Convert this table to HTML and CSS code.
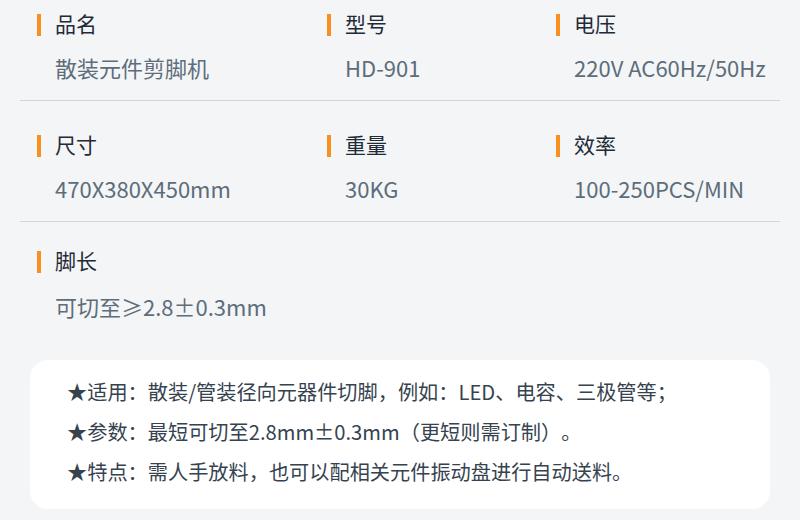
FILE: index.html
```html
<!DOCTYPE html>
<html lang="zh-CN">
<head>
<meta charset="utf-8">
<link rel="stylesheet" href="styles.css">
</head>
<body>
<div class="page">
  <div class="spec-row first">
    <div class="spec"><div class="label">品名</div><div class="value">散装元件剪脚机</div></div>
    <div class="spec"><div class="label">型号</div><div class="value">HD-901</div></div>
    <div class="spec"><div class="label">电压</div><div class="value">220V AC60Hz/50Hz</div></div>
  </div>
  <div class="spec-row">
    <div class="spec"><div class="label">尺寸</div><div class="value">470X380X450mm</div></div>
    <div class="spec"><div class="label">重量</div><div class="value">30KG</div></div>
    <div class="spec"><div class="label">效率</div><div class="value">100-250PCS/MIN</div></div>
  </div>
  <div class="spec-row last">
    <div class="spec"><div class="label">脚长</div><div class="value">可切至≥2.8±0.3mm</div></div>
  </div>
  <div class="note">
    <p>★适用：散装/管装径向元器件切脚，例如：LED、电容、三极管等；</p>
    <p>★参数：最短可切至2.8mm±0.3mm（更短则需订制）。</p>
    <p>★特点：需人手放料，也可以配相关元件振动盘进行自动送料。</p>
  </div>
</div>
</body>
</html>
```

FILE: styles.css
```css
html, body {
  margin: 0;
  padding: 0;
  background: #f4f5f7;
}
body {
  width: 800px;
  height: 520px;
  overflow: hidden;
  font-family: "Noto Sans CJK SC", "Noto Sans", sans-serif;
  text-spacing-trim: space-all;
}
.page {
  padding: 0 20px;
}
.spec-row {
  display: grid;
  grid-template-columns: 290px 229px 1fr;
  padding: 31px 0 19px 17px;
  border-bottom: 1px solid #cfd6dd;
}
.spec-row.first {
  padding-top: 11px;
}
.spec-row.last {
  border-bottom: none;
  padding-top: 26px;
  padding-bottom: 31px;
}
.spec-row.last .value {
  margin-top: 20px;
}
.label {
  position: relative;
  padding-left: 18px;
  font-size: 21px;
  line-height: 24px;
  color: #1f2b36;
}
.label::before {
  content: "";
  position: absolute;
  left: 0;
  top: 3px;
  width: 4px;
  height: 22px;
  background: #f7901e;
}
.value {
  margin-top: 18px;
  padding-left: 18px;
  font-size: 22px;
  line-height: 28px;
  color: #5d6d7a;
  white-space: nowrap;
}
.note {
  margin: 9px 10px 0;
  background: #ffffff;
  border-radius: 18px;
  padding: 12px 37px 17px;
}
.note p {
  margin: 0;
  font-size: 20.2px;
  line-height: 40px;
  color: #36434f;
  white-space: nowrap;
}
```
